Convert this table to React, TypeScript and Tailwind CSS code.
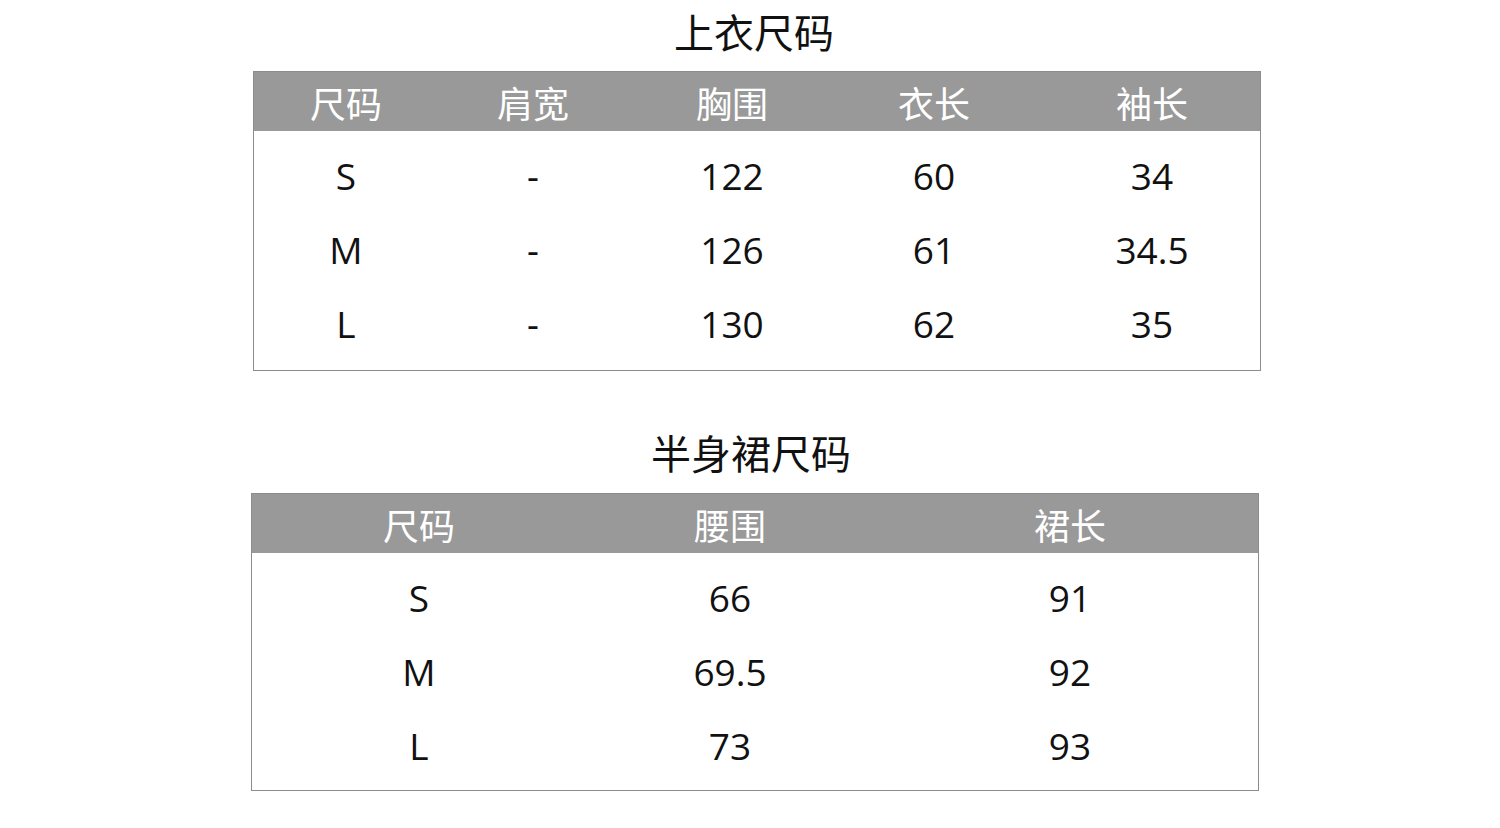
const font = { fontFamily: '"Open Sans", "Noto Sans CJK SC", sans-serif' };

const topHead = ['尺码', '肩宽', '胸围', '衣长', '袖长'];
const topRows = [
  ['S', '-', '122', '60', '34'],
  ['M', '-', '126', '61', '34.5'],
  ['L', '-', '130', '62', '35'],
];

const skirtHead = ['尺码', '腰围', '裙长'];
const skirtRows = [
  ['S', '66', '91'],
  ['M', '69.5', '92'],
  ['L', '73', '93'],
];

type Props = {
  title: string;
  head: string[];
  rows: string[][];
  cols: string;
  pads: string[];
  offset: string;
  titleCls: string;
  bodyCls: string;
};

function SizeTable({ title, head, rows, cols, pads, offset, titleCls, bodyCls }: Props) {
  return (
    <section className={`w-[1008px] ${offset}`}>
      <h2 className={`text-center text-[40px] leading-[44px] text-[#111] ${titleCls}`}>{title}</h2>
      <div className="border border-[#8c8c8c] bg-white">
        <div className={`grid ${cols} h-[59px] bg-[#999999] text-white text-[36px] items-center pt-[6px]`}>
          {head.map((h, i) => (
            <div key={h} className={`text-center leading-none ${pads[i]}`}>{h}</div>
          ))}
        </div>
        <div className={bodyCls}>
          {rows.map((r) => (
            <div key={r[0]} className={`grid ${cols} h-[74px] items-center text-[37px] text-[#111]`}>
              {r.map((c, i) => (
                <div key={i} className={`text-center leading-none ${pads[i]}`}>{c}</div>
              ))}
            </div>
          ))}
        </div>
      </div>
    </section>
  );
}

export default function App() {
  return (
    <div className="w-[1500px] h-[828px] bg-white overflow-hidden pt-[11px]" style={font}>
      <SizeTable
        title="上衣尺码"
        head={topHead}
        rows={topRows}
        cols="grid-cols-[184px_190px_208px_196px_228px]"
        pads={['', '', '', '', 'pl-[12px]']}
        offset="ml-[253px]"
        titleCls="mb-[16px] pr-[6px]"
        bodyCls="pt-[7px] pb-[10px]"
      />
      <div className="h-[61px]" />
      <SizeTable
        title="半身裙尺码"
        head={skirtHead}
        rows={skirtRows}
        cols="grid-cols-[334px_288px_1fr]"
        pads={['', '', 'pl-[8px]']}
        offset="ml-[251px]"
        titleCls="mb-[17px] pr-[8px]"
        bodyCls="pt-[7px] pb-[8px]"
      />
    </div>
  );
}
